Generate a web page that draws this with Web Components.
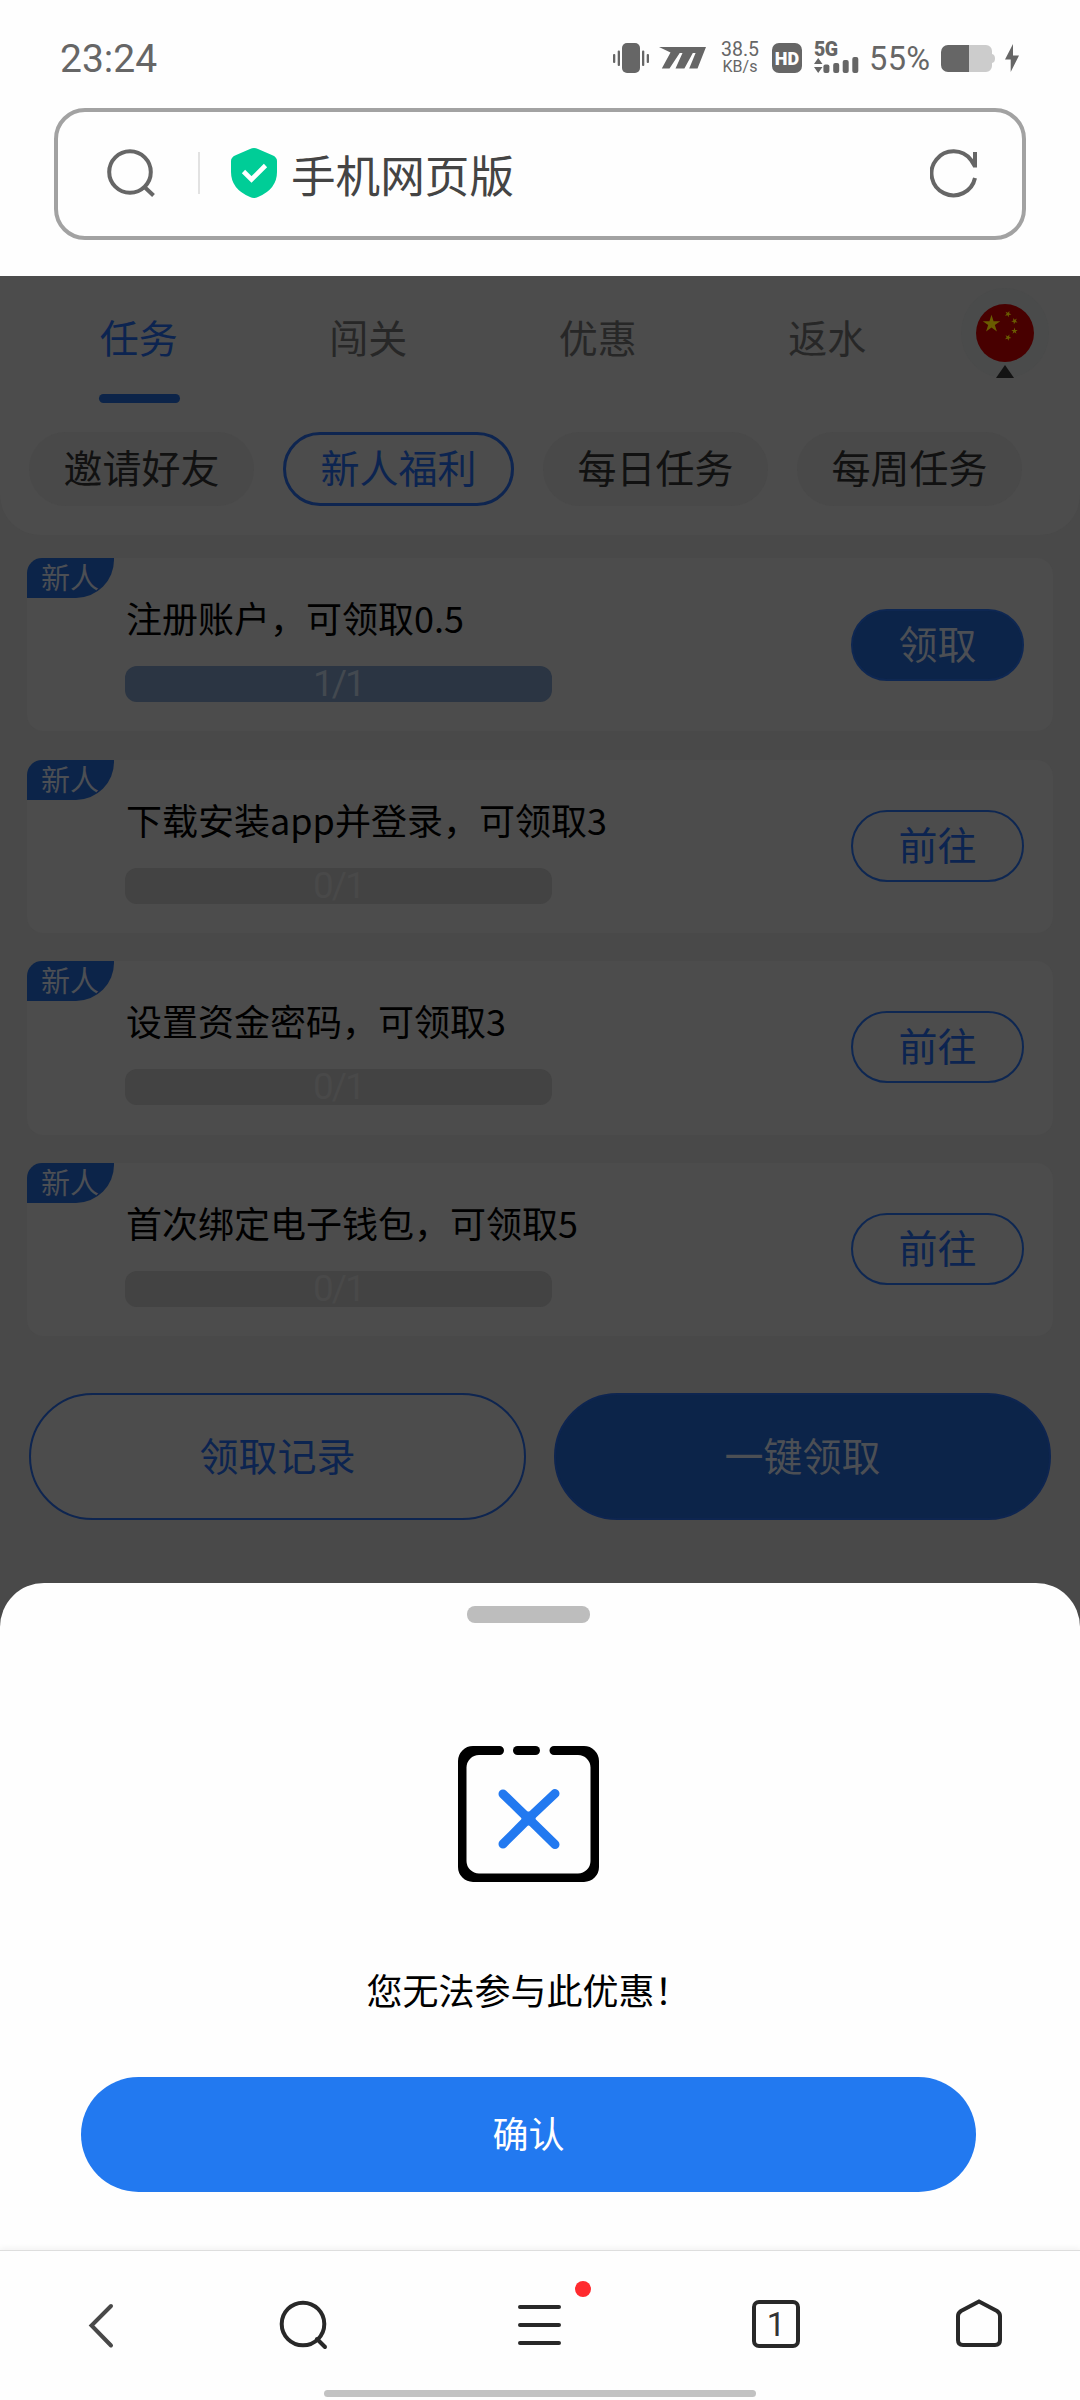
<!DOCTYPE html>
<html lang="zh-CN">
<head>
<meta charset="utf-8">
<title>任务</title>
<style>
html,body{margin:0;padding:0}
body{width:1080px;height:2400px;overflow:hidden;background:#fefefe;font-family:"Noto Sans CJK SC",sans-serif}
</style>
</head>
<body>
<phone-screen></phone-screen>
<script>
const define = (name, html) => {
  const t = document.createElement('template');
  t.innerHTML = '<style>*{box-sizing:border-box}svg{display:block;flex:none}</style>' + html;
  customElements.define(name, class extends HTMLElement {
    constructor(){ super(); this.attachShadow({mode:'open'}).appendChild(t.content.cloneNode(true)); }
  });
};

define('status-bar', `<style>
:host{display:flex;height:108px;padding:33px 61px 0 60px;justify-content:space-between;color:#666;font-family:Roboto,sans-serif}
.time{font-size:39px;line-height:52px;height:50px}
.icons{display:flex;height:50px;align-items:center}
.speed{width:42px;margin-left:13px;display:flex;flex-direction:column;align-items:center;white-space:nowrap;height:34px}
.speed b{font-weight:400;font-size:19.500px;line-height:18px;height:18px}
.speed i{font-style:normal;font-size:16px;line-height:16px;height:16px}
.hd{margin-left:11px;width:30px;height:30px;border-radius:7px;background:#666;color:#fefefe;font:900 18px/31px Roboto,sans-serif;text-align:center}
.net{margin-left:12px;width:46px;height:30px;display:flex;flex-direction:column}
.net span{font:900 19.500px/14px Roboto,sans-serif;height:14px;letter-spacing:-.5px}
.pct{margin-left:9px;width:64px;font-size:32.500px;line-height:52px;height:50px;letter-spacing:.4px}
</style>
<div class="time">23:24</div>
<div class="icons">
 <svg width="36" height="30" viewBox="0 0 36 30" fill="#666"><rect x="9" width="18" height="30" rx="5"/><rect x="4.7" y="7.5" width="2.3" height="15.5" rx="1"/><rect y="11" width="2.3" height="9" rx="1"/><rect x="29" y="7.5" width="2.3" height="15.5" rx="1"/><rect x="33.7" y="11" width="2.3" height="9" rx="1"/></svg>
 <svg style="margin-left:10px" width="47" height="22" viewBox="0 0 47 22" fill="#666"><path d="M0 0H47L38.5 21.5H30.2L36.6 6H33.8L25.4 21.5H16.5L23.5 6H20.7L10.5 21.5H2.8L11.5 5.5Z"/></svg>
 <div class="speed"><b>38.5</b><i>KB/s</i></div>
 <div class="hd">HD</div>
 <div class="net"><span>5G</span><svg width="46" height="16" viewBox="0 0 46 16" fill="#666"><path d="M0 7L4.2 1L8.5 7ZM0 10H8.5L4.2 16Z"/><rect x="9.4" y="7.5" width="6" height="8.5" rx="2"/><rect x="19.2" y="6" width="6" height="10" rx="2"/><rect x="28.7" y="3" width="6" height="13" rx="2"/><rect x="38.3" width="6" height="16" rx="2"/></svg></div>
 <div class="pct">55%</div>
 <svg style="margin-left:8px" width="54" height="27" viewBox="0 0 54 27"><path d="M28 0H45a6 6 0 0 1 6 6v3q3 .5 3 4.5t-3 4.500v3a6 6 0 0 1-6 6H28Z" fill="#ccc"/><path d="M28 0H7a7 7 0 0 0-7 7V20a7 7 0 0 0 7 7H28Z" fill="#666"/></svg>
 <svg style="margin-left:10px" width="14" height="28" viewBox="0 0 14 28" fill="#666"><path d="M8 0L0 15.500H5.700V28L14 11.500H8Z"/></svg>
</div>`);

define('address-bar', `<style>
:host{display:flex;width:972px;height:132px;margin-left:54px;border:4px solid #a2a2a2;border-radius:31px;align-items:center;padding:0 44px 2px 49px}
i{width:2px;height:42px;background:#e2e2e2;margin-left:43px}
span{font-size:44.600px;line-height:60px;color:#444;margin-left:14px;flex:1;padding-top:1px}
</style>
<svg width="48" height="48" viewBox="0 0 48 48" fill="none" stroke="#666" stroke-width="4"><circle cx="23" cy="23" r="20.800"/><path d="M37.500 38L46.500 46.500"/></svg>
<i></i>
<svg style="margin-left:31px" width="46" height="50" viewBox="0 0 46 50"><path d="M23 0Q25 0 27 1L42 7.500Q46 9.500 46 13V24Q46 41 27 49Q23 51 19 49Q0 41 0 24V13Q0 9.500 4 7.500L19 1Q21 0 23 0Z" fill="#00cd97"/><path d="M12.500 23.500L20.500 31.500L34.500 17.500" stroke="#fff" stroke-width="4.600" fill="none"/></svg>
<span>手机网页版</span>
<svg width="48" height="50" viewBox="0 0 48 50" fill="none" stroke="#666" stroke-width="4"><path d="M45 30A22 22 0 1 1 41 12L45 18.500M45 4V19.500"/></svg>`);

define('tab-item', `<style>
:host{display:flex;flex-direction:column;align-items:center;width:229.500px;color:#272727;font-size:39px;line-height:58px;padding-top:31px}
:host([active]){color:#0c2450}
i{width:81px;height:9px;border-radius:4.500px;margin:29px 0 0 2px}
:host([active]) i{background:#0c2449}
</style><slot></slot><i></i>`);

define('locale-flag', `<style>
:host{display:flex;flex-direction:column;align-items:center;width:88px;height:90px;margin:12px 0 0 19px;border-radius:50%;background:#4a4b4b;padding-top:16px}
</style>
<svg width="58" height="58" viewBox="0 0 58 58"><defs><path id="s" d="M0-1L.225-.309.951-.309.363.118.588.809 0 .382-.588.809-.363.118-.951-.309-.225-.309Z"/></defs><circle cx="29" cy="29" r="29" fill="#480000"/><g fill="#6a5c00"><use href="#s" transform="translate(15.500 20) scale(9.200)"/><use href="#s" transform="translate(32 10) rotate(25) scale(3.400)"/><use href="#s" transform="translate(38.500 17) rotate(45) scale(3.400)"/><use href="#s" transform="translate(38.500 27) scale(3.400)"/><use href="#s" transform="translate(32 33.500) rotate(25) scale(3.400)"/></g></svg>
<svg style="margin-top:3px" width="18" height="13" viewBox="0 0 18 13"><path d="M9 0L18 13H0Z" fill="#131313"/></svg>`);

define('filter-chip', `<style>
:host{display:flex;width:225px;height:74px;border-radius:37px;background:#494949;color:#111;font-size:39px;line-height:58px;justify-content:center;align-items:center;padding-bottom:6px}
:host([active]){width:231px;background:none;border:3px solid #0e2550;color:#0c2450}
</style><slot></slot>`);

define('page-head', `<style>
:host{display:block;height:259px;background:#4c4c4c;border-radius:0 0 40px 40px}
.tabs{display:flex;height:156px;padding-left:24px}
.chips{display:flex;gap:29px;padding-left:29px}
</style>
<div class="tabs"><tab-item active>任务</tab-item><tab-item>闯关</tab-item><tab-item>优惠</tab-item><tab-item>返水</tab-item><locale-flag></locale-flag></div>
<div class="chips"><filter-chip>邀请好友</filter-chip><filter-chip active>新人福利</filter-chip><filter-chip>每日任务</filter-chip><filter-chip>每周任务</filter-chip></div>`);

define('task-card', `<style>
:host{display:flex;height:173.300px;background:#4c4c4c;border-radius:16px;align-items:flex-start;--bar:#434343;--num:#494949}
:host([done]){--bar:#2b3543;--num:#434950}
.tag{width:87px;height:40px;border-radius:15px 0 38px 0;background:#0c2449;color:#4c4f54;font-size:29px;line-height:36px;padding-left:14px;white-space:nowrap}
.body{margin-left:11px;padding-top:33px;width:600px;color:#000;font-size:36px;line-height:52px}
.title{height:52px;padding-left:1px}
.bar{width:427px;height:36px;margin-top:23px;border-radius:12px;background:var(--bar);color:var(--num);text-align:center;font:37px/36px Roboto,sans-serif;letter-spacing:-2px}
.act{margin:50px 0 0 126px;width:173px;height:72px;border:2px solid #0e2752;border-radius:36px;color:#0c2450;font-size:39px;line-height:63px;text-align:center}
:host([done]) .act{margin-top:51px;background:#0c2449;color:#4c4f54}
</style>
<div class="tag">新人</div>
<div class="body"><div class="title"><slot></slot></div><div class="bar"><slot name="count"></slot></div></div>
<div class="act"><slot name="action"></slot></div>`);

define('wide-button', `<style>
:host{display:block;flex:1;height:127px;border:2px solid #0e2550;border-radius:64px;background:#4c4c4c;color:#0c2450;font-size:39px;line-height:118px;text-align:center}
:host([primary]){background:#0c2449;color:#4c4f54}
</style><slot></slot>`);

define('task-page', `<style>
:host{display:block;height:1307px;margin-top:36px;background:#494949}
.list{display:flex;flex-direction:column;gap:28.400px;padding:23px 27px 0}
.foot{display:flex;gap:28px;padding:57px 29px 0}
</style>
<page-head></page-head>
<div class="list">
<task-card done>注册账户，可领取0.5<span slot="count">1/1</span><span slot="action">领取</span></task-card>
<task-card>下载安装app并登录，可领取3<span slot="count">0/1</span><span slot="action">前往</span></task-card>
<task-card>设置资金密码，可领取3<span slot="count">0/1</span><span slot="action">前往</span></task-card>
<task-card>首次绑定电子钱包，可领取5<span slot="count">0/1</span><span slot="action">前往</span></task-card>
</div>
<div class="foot"><wide-button>领取记录</wide-button><wide-button primary>一键领取</wide-button></div>`);

define('bottom-sheet', `<style>
:host{display:block;height:667px;background:#494949}
.panel{height:667px;background:#fefefe;border-radius:44px 44px 0 0;display:flex;flex-direction:column;align-items:center;padding:23px 23px 0 0;font-size:36px;color:#000}
.grip{width:123px;height:17px;border-radius:8px;background:#bdbdbd}
p{margin:81px 0 0;height:52px;line-height:52px}
.ok{margin-top:62px;width:895px;height:115px;border-radius:57.500px;background:#2279f0;color:#fff;line-height:111px;text-align:center}
</style>
<div class="panel"><div class="grip"></div>
<svg style="margin-top:123px" width="141" height="136" viewBox="0 0 141 136"><path fill="#000" d="M41.500 0H15A15 15 0 0 0 0 15V121A15 15 0 0 0 15 136H126A15 15 0 0 0 141 121V15A15 15 0 0 0 126 0H96A4.500 4.500 0 0 0 96 9H120A12.500 12.500 0 0 1 132.500 21.500V115A12.500 12.500 0 0 1 120 127.500H21A12.500 12.500 0 0 1 8.500 115V21.500A12.500 12.500 0 0 1 21 9H41.500A4.500 4.500 0 0 0 41.500 0Z"/><rect x="55" width="27" height="9" rx="4.500"/><path d="M45 48L62 64.500Q66 68.500 70.500 72.500L97 98.500M45 98L62 81Q66 77 70.500 72.500L97 47.500" fill="none" stroke="#2279f0" stroke-width="9" stroke-linecap="round"/><circle cx="70.500" cy="72.500" r="7" fill="#2279f0"/></svg>
<p>您无法参与此优惠！</p><div class="ok">确认</div></div>`);

define('nav-bar', `<style>
:host{display:block;height:150px;background:#fefefe;border-top:1px solid #dedede;box-shadow:0 -2px 6px rgba(0,0,0,.05)}
.row{display:flex;height:139px;padding:48px 76px 0 87px;justify-content:flex-start;align-items:flex-start}
.menu{position:relative;margin-left:189px}
.menu i{position:absolute;left:58px;top:-18px;width:16px;height:16px;border-radius:50%;background:#ff2a2e}
.num{width:48px;height:48px;margin:1px 0 0 189px;border:4px solid #282828;border-radius:7px;color:#333;font:400 33px/41px Roboto,sans-serif;text-align:center}
.home{width:432px;height:7px;border-radius:4px;background:#c2c2c2;margin-left:324px}
</style>
<div class="row">
<svg width="28" height="52" viewBox="0 0 28 52" fill="none" stroke="#484848" stroke-width="4" stroke-linecap="round"><path d="M24 7L4.500 26.500L24 46.500"/></svg>
<svg style="margin:0 0 0 163px" width="50" height="52" viewBox="0 0 50 52" fill="none" stroke="#282828" stroke-width="4" stroke-linecap="round"><circle cx="25" cy="25" r="21.300"/><path d="M39 40L47 48"/></svg>
<div class="menu"><svg width="46" height="52" viewBox="0 0 46 52" stroke="#282828" stroke-width="4" stroke-linecap="round"><path d="M3 8H42M3 26H42M3 44H42"/></svg><i></i></div>
<div class="num">1</div>
<svg style="margin-left:156px" width="46" height="50" viewBox="0 0 46 50" fill="none" stroke="#282828" stroke-width="4"><path d="M23 2.500L41 12Q44 14 44 17V41Q44 46 39 46H7Q2 46 2 41V17Q2 14 5 12Z"/></svg>
</div>
<div class="home"></div>`);

define('phone-screen', `<style>:host{display:block;width:1080px;height:2400px;background:#fefefe}</style>
<status-bar></status-bar><address-bar></address-bar><task-page></task-page><bottom-sheet></bottom-sheet><nav-bar></nav-bar>`);
</script>
</body>
</html>
